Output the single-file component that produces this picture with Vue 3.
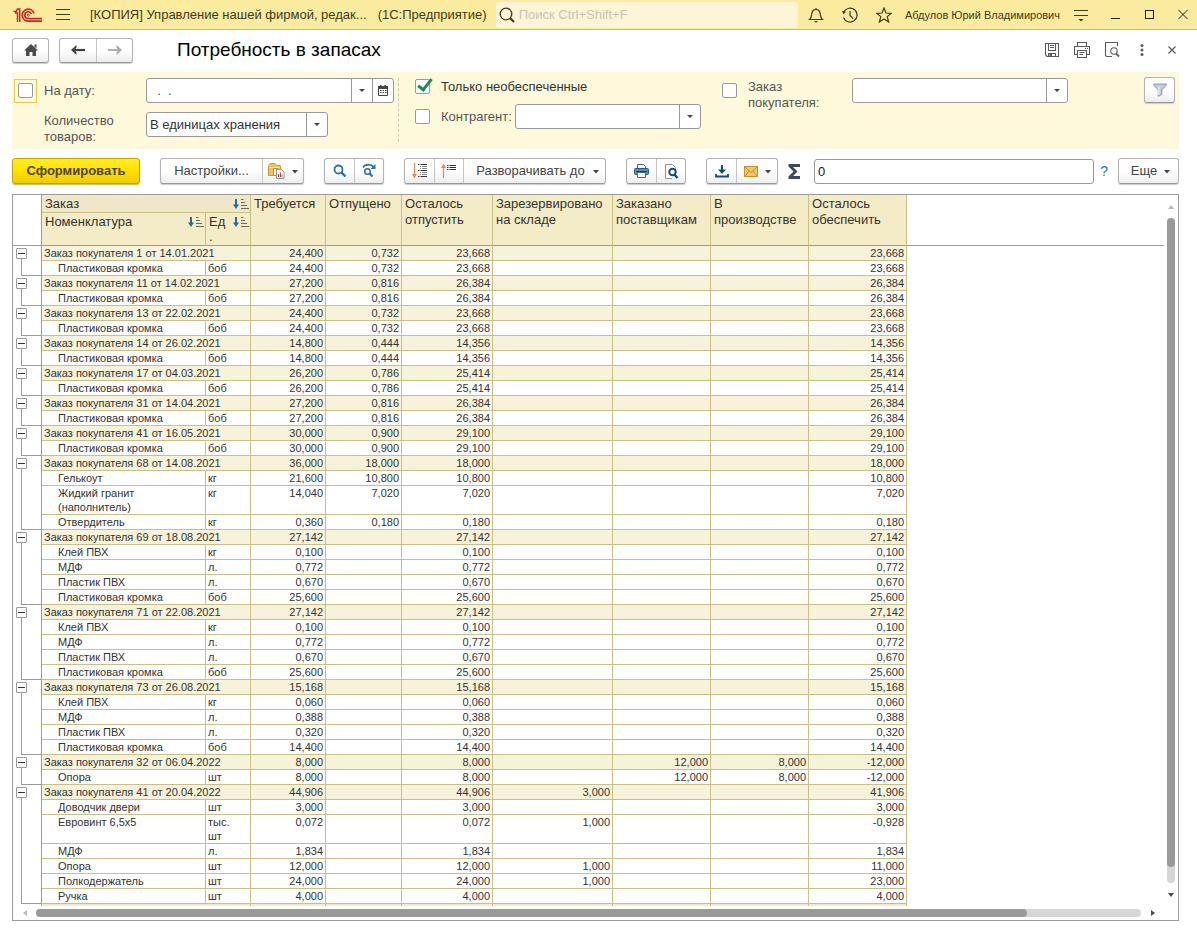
<script setup>
import { ref } from 'vue'

const onlyMissing = ref(true)
const byDate = ref(false)
const byPartner = ref(false)
const byOrder = ref(false)
const date = ref('\u00a0\u00a0.\u00a0\u00a0.')
const total = ref('0')
const search = ref('')

const band = (title, values, items) => ({ title, values, items })
const edge = (number, day, a, b, c) =>
  band(`Заказ покупателя ${number} от ${day}`, [a, b, c, '', '', '', c], [
    ['Пластиковая кромка', 'боб', a, b, c, '', '', '', c],
  ])
const line = (name, unit, v) => [name, unit, v, '', v, '', '', '', v]

const groups = [
  edge('1', '14.01.2021', '24,400', '0,732', '23,668'),
  edge('11', '14.02.2021', '27,200', '0,816', '26,384'),
  edge('13', '22.02.2021', '24,400', '0,732', '23,668'),
  edge('14', '26.02.2021', '14,800', '0,444', '14,356'),
  edge('17', '04.03.2021', '26,200', '0,786', '25,414'),
  edge('31', '14.04.2021', '27,200', '0,816', '26,384'),
  edge('41', '16.05.2021', '30,000', '0,900', '29,100'),
  band('Заказ покупателя 68 от 14.08.2021', ['36,000', '18,000', '18,000', '', '', '', '18,000'], [
    ['Гелькоут', 'кг', '21,600', '10,800', '10,800', '', '', '', '10,800'],
    ['Жидкий гранит (наполнитель)', 'кг', '14,040', '7,020', '7,020', '', '', '', '7,020'],
    ['Отвердитель', 'кг', '0,360', '0,180', '0,180', '', '', '', '0,180'],
  ]),
  band('Заказ покупателя 69 от 18.08.2021', ['27,142', '', '27,142', '', '', '', '27,142'], [
    line('Клей ПВХ', 'кг', '0,100'),
    line('МДФ', 'л.', '0,772'),
    line('Пластик ПВХ', 'л.', '0,670'),
    line('Пластиковая кромка', 'боб', '25,600'),
  ]),
  band('Заказ покупателя 71 от 22.08.2021', ['27,142', '', '27,142', '', '', '', '27,142'], [
    line('Клей ПВХ', 'кг', '0,100'),
    line('МДФ', 'л.', '0,772'),
    line('Пластик ПВХ', 'л.', '0,670'),
    line('Пластиковая кромка', 'боб', '25,600'),
  ]),
  band('Заказ покупателя 73 от 26.08.2021', ['15,168', '', '15,168', '', '', '', '15,168'], [
    line('Клей ПВХ', 'кг', '0,060'),
    line('МДФ', 'л.', '0,388'),
    line('Пластик ПВХ', 'л.', '0,320'),
    line('Пластиковая кромка', 'боб', '14,400'),
  ]),
  band('Заказ покупателя 32 от 06.04.2022', ['8,000', '', '8,000', '', '12,000', '8,000', '-12,000'], [
    ['Опора', 'шт', '8,000', '', '8,000', '', '12,000', '8,000', '-12,000'],
  ]),
  band('Заказ покупателя 41 от 20.04.2022', ['44,906', '', '44,906', '3,000', '', '', '41,906'], [
    line('Доводчик двери', 'шт', '3,000'),
    ['Евровинт 6,5х5', 'тыс. шт', '0,072', '', '0,072', '1,000', '', '', '-0,928'],
    line('МДФ', 'л.', '1,834'),
    ['Опора', 'шт', '12,000', '', '12,000', '1,000', '', '', '11,000'],
    ['Полкодержатель', 'шт', '24,000', '', '24,000', '1,000', '', '', '23,000'],
    line('Ручка', 'шт', '4,000'),
  ]),
]

const heads = [
  'Требуется', 'Отпущено', 'Осталось отпустить', 'Зарезервировано на складе',
  'Заказано поставщикам', 'В производстве', 'Осталось обеспечить',
]
</script>

<template>
  <div class="app">
    <header class="titlebar">
      <svg class="logo" width="30" height="16" viewBox="0 0 30 16" fill="none" stroke="#c9252b">
        <path d="M0.500 4.500 H3 L4.500 2 H6.700 V15 M2 6 H4.500 V15" stroke-width="1.500" />
        <path d="M21 6.500 A6 6 0 1 0 15.500 14.200 H29" stroke-width="1.700" />
        <path d="M18.300 7 A3.400 3.400 0 1 0 15.500 11.600 H29" stroke-width="1.700" />
        <circle cx="15.300" cy="8.200" r="1" stroke-width="1" />
      </svg>
      <button class="plain burger" aria-label="Меню">
        <svg width="14" height="12" viewBox="0 0 14 12" stroke="#3f3b22"><path d="M0 0.500H14M0 5.500H14M0 10.500H14" /></svg>
      </button>
      <span class="app-name">[КОПИЯ] Управление нашей фирмой, редак...</span>
      <span class="platform">(1С:Предприятие)</span>
      <label class="search">
        <svg width="16" height="16" viewBox="0 0 16 16" fill="none" stroke="#3f3b2a"><circle cx="7" cy="7" r="5.800" stroke-width="1.300" /><path d="M11 11L15 15" stroke-width="2.200" /></svg>
        <input v-model="search" placeholder="Поиск Ctrl+Shift+F" aria-label="Поиск" />
      </label>
      <nav class="tools">
        <button class="plain" aria-label="Уведомления">
          <svg width="16" height="16" viewBox="0 0 16 16" fill="none" stroke="#3f3b22" stroke-width="1.200"><path d="M1.500 12.500 C4 10.500 3.500 8 4 5.500 C4.500 3.500 6 2.500 8 2.500 C10 2.500 11.500 3.500 12 5.500 C12.500 8 12 10.500 14.500 12.500 Z M8 2.500 V1" /><path d="M6 14 H10 L8 15.800 Z" fill="#3f3b22" stroke="none" /></svg>
        </button>
        <button class="plain" aria-label="История">
          <svg width="16" height="16" viewBox="0 0 16 16" fill="none" stroke="#3f3b22" stroke-width="1.200"><path d="M1.800 5 A7 7 0 1 1 1.500 10.500" /><path d="M8 4 V8.500 L11 11.500" /><path d="M0 4 L4 4.500 L1.500 7.500 Z" fill="#3f3b22" stroke="none" /></svg>
        </button>
        <button class="plain" aria-label="Избранное">
          <svg width="16" height="16" viewBox="0 0 16 16" fill="none" stroke="#3f3b22" stroke-width="1.200"><path d="M8 1 L10 6 L15.200 6.300 L11.200 9.600 L12.700 15 L8 12 L3.300 15 L4.800 9.600 L0.800 6.300 L6 6 Z" /></svg>
        </button>
      </nav>
      <span class="user">Абдулов Юрий Владимирович</span>
      <nav class="window">
        <button class="plain" aria-label="Настройка панели">
          <svg width="16" height="14" viewBox="0 0 16 14" stroke="#3f3b22" stroke-width="1.200"><path d="M1 2.500H15M1 7.500H15" /><path d="M5.500 11H10.500L8 13.500Z" fill="#3f3b22" stroke="none" /></svg>
        </button>
        <button class="plain" aria-label="Свернуть">
          <svg width="12" height="12" viewBox="0 0 12 12" stroke="#222"><path d="M2 9.500H11" /></svg>
        </button>
        <button class="plain" aria-label="Развернуть">
          <svg width="12" height="12" viewBox="0 0 12 12" fill="none" stroke="#222"><rect x="2.500" y="1.500" width="8" height="8" /></svg>
        </button>
        <button class="plain" aria-label="Закрыть">
          <svg width="12" height="12" viewBox="0 0 12 12" stroke="#222"><path d="M1.500 1L10.500 10M10.500 1L1.500 10" /></svg>
        </button>
      </nav>
    </header>

    <div class="pagehead">
      <div class="group">
        <button class="w37" aria-label="Начальная страница">
          <svg width="14" height="12" viewBox="0 0 14 12" fill="#4a4a4a"><path d="M7 0 L14 6.500 H12 V12 H8.500 V8 H5.500 V12 H2 V6.500 H0 Z" /><path d="M10.500 0.500H12.500V4.500L10.500 2.500Z" /></svg>
        </button>
      </div>
      <div class="group">
        <button class="w37" aria-label="Назад">
          <svg width="14" height="10" viewBox="0 0 14 10"><path d="M14 5H3" stroke="#404040" stroke-width="2.200" /><path d="M5.500 0 V2.500 L3.500 5 L5.500 7.500 V10 L0 5Z" fill="#404040" /></svg>
        </button>
        <button class="w37" aria-label="Вперед">
          <svg width="14" height="10" viewBox="0 0 14 10"><path d="M0 5H11" stroke="#a9a9a9" stroke-width="1.800" /><path d="M8.500 0 V2.500 L10.500 5 L8.500 7.500 V10 L14 5Z" fill="#a9a9a9" /></svg>
        </button>
      </div>
      <h1>Потребность в запасах</h1>
      <nav class="page-tools">
        <button class="plain" aria-label="Сохранить">
          <svg width="16" height="16" viewBox="0 0 16 16" fill="none" stroke="#5a5a5a" stroke-width="1.100"><path d="M1.500 1.500H14.500V14.500H3L1.500 13Z" /><path d="M4.500 1.500V8.500H11.500V1.500M6 3.500H10M6 5.500H10M4.500 14.500V11.500H11.500V14.500" /><path d="M5.500 12H8V14.500H5.500Z" fill="#5a5a5a" stroke="none" /></svg>
        </button>
        <button class="plain" aria-label="Печать">
          <svg width="16" height="16" viewBox="0 0 16 16" fill="none" stroke="#5a5a5a" stroke-width="1.100"><path d="M3.500 4.500V0.500H12.500V4.500M3.500 12.500H0.500V4.500H15.500V12.500H12.500" /><path d="M3.500 8.500H12.500V15.500H3.500ZM5.500 10.500H10.500M5.500 12.500H9M11 6.500H12M13 6.500H14" /></svg>
        </button>
        <button class="plain" aria-label="Предварительный просмотр">
          <svg width="16" height="16" viewBox="0 0 16 16" fill="none" stroke="#5a5a5a" stroke-width="1.100"><path d="M8 14.500H2.500L1.500 13.500V0.500H13.500V4" /><circle cx="10" cy="9" r="3.200" /><path d="M12 11.500L15 14.500" stroke-width="1.800" /></svg>
        </button>
        <button class="plain" aria-label="Другие действия">
          <svg width="16" height="16" viewBox="0 0 16 16" fill="#5a5a5a"><circle cx="8" cy="3.500" r="1.500" /><circle cx="8" cy="8" r="1.500" /><circle cx="8" cy="12.500" r="1.500" /></svg>
        </button>
        <button class="plain" aria-label="Закрыть форму">
          <svg width="16" height="16" viewBox="0 0 16 16" stroke="#5a5a5a" stroke-width="1.200"><path d="M4.500 4.500L11.500 11.500M11.500 4.500L4.500 11.500" /></svg>
        </button>
      </nav>
    </div>

    <form class="filters" @submit.prevent>
      <div class="fields">
        <span class="focus"><input id="by-date" v-model="byDate" type="checkbox" /></span>
        <label for="by-date">На дату:</label>
        <div class="datebox">
          <input v-model="date" type="text" aria-label="Дата" />
          <button aria-label="Выбрать"><svg width="6" height="3" viewBox="0 0 6 3" fill="#444"><path d="M0 0H6L3 3Z" /></svg></button>
          <button aria-label="Календарь">
            <svg width="10" height="11" viewBox="0 0 10 11"><path d="M0.500 1.500H9.500V10.500H0.500Z" fill="#fff" stroke="#444" /><path d="M0 1H10V4H0ZM2 0H3.500V2H2ZM6.500 0H8V2H6.500Z" fill="#444" /><path d="M2 5.500H8.500M2 7.500H8.500" stroke="#444" stroke-dasharray="1.500 1" /></svg>
          </button>
        </div>
        <span></span>
        <label for="units">Количество товаров:</label>
        <div class="combo units">
          <select id="units"><option>В единицах хранения</option></select>
          <svg width="6" height="3" viewBox="0 0 6 3" fill="#444"><path d="M0 0H6L3 3Z" /></svg>
        </div>
      </div>
      <div class="partner">
        <div class="line">
          <input id="only" v-model="onlyMissing" type="checkbox" />
          <label for="only" class="dark">Только необеспеченные</label>
        </div>
        <div class="line">
          <input id="partner" v-model="byPartner" type="checkbox" />
          <label for="partner">Контрагент:</label>
          <div class="combo">
            <select aria-label="Контрагент"><option></option></select>
            <svg width="6" height="3" viewBox="0 0 6 3" fill="#444"><path d="M0 0H6L3 3Z" /></svg>
          </div>
        </div>
      </div>
      <div class="order">
        <input id="order" v-model="byOrder" type="checkbox" />
        <label for="order">Заказ покупателя:</label>
        <div class="combo">
          <select aria-label="Заказ покупателя"><option></option></select>
          <svg width="6" height="3" viewBox="0 0 6 3" fill="#444"><path d="M0 0H6L3 3Z" /></svg>
        </div>
      </div>
      <div class="group funnel">
        <button class="w30" aria-label="Отбор">
          <svg width="14" height="14" viewBox="0 0 14 14"><path d="M0.700 1 H13.300 V2 L8.800 7 V11.500 L5.300 13.300 V7 L0.700 2Z" fill="#c3ccd6" stroke="#8797a8" /><path d="M5.800 3.500V12" stroke="#e6ecf2" stroke-width="1.500" /></svg>
        </button>
      </div>
    </form>

    <div class="toolbar">
      <button class="generate">Сформировать</button>
      <div class="group">
        <button class="settings">Настройки...</button>
        <button class="menu41" aria-label="Варианты отчета">
          <svg width="17" height="16" viewBox="0 0 17 16"><path d="M0.500 2.500 L2 0.500H7L8.500 2.500H12.500V12.500H0.500Z" fill="#eec25c" stroke="#d39b34" /><path d="M1 4.500H12" stroke="#fbe5a8" /><path d="M5.500 5.500H10" stroke="#c58f3b" /><path d="M5.500 5.500H9.500V12.500H5.500Z" fill="#f8efd8" stroke="#b0905e" /><path d="M8.500 6.500H13.500L16 9V15.500H8.500Z" fill="#fff" stroke="#8d9196" /><path d="M10.500 14V11M12.500 14V9.500" stroke="#d33a3a" /><path d="M14 14V11.500" stroke="#3c9a54" /></svg>
          <svg class="caret" width="6" height="4" viewBox="0 0 6 4" fill="#444"><path d="M0 0H6L3 3.500Z" /></svg>
        </button>
      </div>
      <div class="group">
        <button class="w30" aria-label="Найти"><svg width="14" height="14" viewBox="0 0 14 14" fill="none" stroke="#2b72a6"><circle cx="5.500" cy="5.500" r="4" stroke-width="1.800" /><path d="M8.500 8.500L12.500 12.500" stroke-width="2.400" /></svg></button>
        <button class="w30" aria-label="Найти далее"><svg width="14" height="16" viewBox="0 0 14 16" fill="none" stroke="#2b72a6"><path d="M1 4.500 C3 1 9 0.500 11.500 4" stroke-width="1.600" /><path d="M13.500 1V6H8.500Z" fill="#2b72a6" stroke="none" /><circle cx="5.500" cy="8.500" r="2.800" stroke-width="1.500" /><path d="M7.500 10.500L10.500 13.500" stroke-width="2" /></svg></button>
      </div>
      <div class="group">
        <button class="w30" aria-label="Развернуть группы"><svg width="16" height="16" viewBox="0 0 16 16"><path d="M2.500 0V14" stroke="#e88a58" stroke-width="1.300" /><path d="M0 11H5L2.500 15.500Z" fill="#e88a58" /><path d="M6 1.500H7.500M8.500 1.500H15M6 7.500H7.500M8.500 7.500H15M6 13.500H7.500M8.500 13.500H15" stroke="#333" /><path d="M8 3.500H9M10 3.500H15M8 5.500H9M10 5.500H15M8 9.500H9M10 9.500H15M8 11.500H9M10 11.500H15" stroke="#888" /></svg></button>
        <button class="w30" aria-label="Свернуть группы"><svg width="16" height="16" viewBox="0 0 16 16"><path d="M2.500 15V2" stroke="#e88a58" stroke-width="1.300" /><path d="M0 5H5L2.500 0.500Z" fill="#e88a58" /><path d="M6 2.500H7.500M8.500 2.500H15M6 4.500H7.500M8.500 4.500H15M6 6.500H7.500M8.500 6.500H15" stroke="#333" /></svg></button>
        <button class="expand">Разворачивать до<svg class="caret" width="6" height="4" viewBox="0 0 6 4" fill="#444"><path d="M0 0H6L3 3.500Z" /></svg></button>
      </div>
      <div class="group">
        <button class="w30" aria-label="Печать отчета"><svg width="15" height="14" viewBox="0 0 15 14"><path d="M3.500 5V0.500H9.500L11.500 2.500V5" fill="#fff" stroke="#3b6a93" /><rect x="0.500" y="4.500" width="14" height="6" rx="1" fill="#5f8bb3" stroke="#2e5c86" /><path d="M2 7.500H13" stroke="#1d3f5e" /><path d="M3.500 8.500H11.500V13.500H3.500Z" fill="#fff" stroke="#3b6a93" /></svg></button>
        <button class="w30" aria-label="Просмотр"><svg width="15" height="15" viewBox="0 0 15 15" fill="none"><path d="M11.500 5V3.500L8.500 0.500H1.500V14.500H8" stroke="#8a959e" fill="#fff" /><circle cx="8.500" cy="8" r="3.200" stroke="#0f4d7c" stroke-width="2" /><path d="M10.500 10.500L13.500 14" stroke="#0f4d7c" stroke-width="2.400" /></svg></button>
      </div>
      <div class="group">
        <button class="w30" aria-label="Сохранить отчет"><svg width="14" height="13" viewBox="0 0 14 13"><path d="M7 0V6" stroke="#0f4d7c" stroke-width="2" /><path d="M3 4.500H11L7 9Z" fill="#0f4d7c" /><path d="M1 9V11.500H13V9" fill="none" stroke="#0f4d7c" stroke-width="1.800" /></svg></button>
        <button class="menu41" aria-label="Отправить">
          <svg width="14" height="11" viewBox="0 0 14 11"><rect x="0.500" y="0.500" width="13" height="10" fill="#f3c766" stroke="#c98f2b" /><path d="M1 1L7 6.500L13 1M1 10L5 5M13 10L9 5" fill="none" stroke="#c98f2b" /></svg>
          <svg class="caret" width="6" height="4" viewBox="0 0 6 4" fill="#444"><path d="M0 0H6L3 3.500Z" /></svg>
        </button>
      </div>
      <svg class="sigma" width="13" height="15" viewBox="0 0 13 15" fill="#3c4b57"><path d="M0.500 0H12V3H5L9.500 7.500L5 12H12V15H0.500V12.500L5.500 7.500L0.500 2.500Z" /></svg>
      <input v-model="total" class="sum" type="text" aria-label="Сумма" />
      <a class="help" href="#">?</a>
      <div class="group"><button class="more">Еще<svg class="caret" width="6" height="4" viewBox="0 0 6 4" fill="#444"><path d="M0 0H6L3 3.500Z" /></svg></button></div>
    </div>

    <main class="report">
      <div class="sheet">
        <table>
          <colgroup>
            <col class="c-tree" /><col class="c-name" /><col class="c-unit" /><col class="c-req" /><col class="c-out" />
            <col class="c-left" /><col class="c-res" /><col class="c-std" /><col class="c-std" /><col class="c-std" /><col />
          </colgroup>
          <thead>
            <tr>
              <td class="tree" rowspan="2"></td>
              <th class="top" colspan="2"><div class="sorted"><span>Заказ</span>
                <svg width="16" height="12" viewBox="0 0 16 12"><path d="M3 1V8" stroke="#1f6ea5" stroke-width="2" /><path d="M0 6.500H6L3 11Z" fill="#1f6ea5" /><path d="M8 1.500H10.500M8 4.500H12M8 7.500H14M8 10.500H16" stroke="#6c6a5c" /></svg>
              </div></th>
              <th v-for="h in heads" :key="h" rowspan="2">{{ h }}</th>
              <td class="rest" rowspan="2"></td>
            </tr>
            <tr class="second">
              <th><div class="sorted"><span>Номенклатура</span>
                <svg width="16" height="12" viewBox="0 0 16 12"><path d="M3 1V8" stroke="#1f6ea5" stroke-width="2" /><path d="M0 6.500H6L3 11Z" fill="#1f6ea5" /><path d="M8 1.500H10.500M8 4.500H12M8 7.500H14M8 10.500H16" stroke="#6c6a5c" /></svg>
              </div></th>
              <th><div class="sorted"><span>Ед<wbr />.</span>
                <svg width="16" height="12" viewBox="0 0 16 12"><path d="M3 1V8" stroke="#1f6ea5" stroke-width="2" /><path d="M0 6.500H6L3 11Z" fill="#1f6ea5" /><path d="M8 1.500H10.500M8 4.500H12M8 7.500H14M8 10.500H16" stroke="#6c6a5c" /></svg>
              </div></th>
            </tr>
          </thead>
          <tbody v-for="g in groups" :key="g.title">
            <tr class="band">
              <td class="tree"><button class="toggle" aria-label="Свернуть группу"></button></td>
              <td colspan="2">{{ g.title }}</td>
              <td v-for="(v, i) in g.values" :key="i" class="num">{{ v }}</td>
              <td class="rest"></td>
            </tr>
            <tr v-for="row in g.items" :key="row[0]" class="item">
              <td class="tree"></td>
              <td class="name">{{ row[0] }}</td>
              <td class="unit">{{ row[1] }}</td>
              <td v-for="(v, i) in row.slice(2)" :key="i" class="num">{{ v }}</td>
              <td class="rest"></td>
            </tr>
          </tbody>
          <tfoot>
            <tr class="foot">
              <td class="tree"></td><td colspan="2"></td><td v-for="h in heads" :key="h"></td><td class="rest"></td>
            </tr>
          </tfoot>
        </table>
      </div>
      <div class="vbar">
        <button class="plain" aria-label="Вверх"><svg width="6" height="4" viewBox="0 0 6 4" fill="#b8b8b8"><path d="M0 4H6L3 0Z" /></svg></button>
        <div class="track"><div class="thumb"></div></div>
        <button class="plain" aria-label="Вниз"><svg width="6" height="4" viewBox="0 0 6 4" fill="#4a4a4a"><path d="M0 0H6L3 4Z" /></svg></button>
      </div>
      <div class="hbar">
        <button class="plain" aria-label="Влево"><svg width="4" height="6" viewBox="0 0 4 6" fill="#b8b8b8"><path d="M4 0V6L0 3Z" /></svg></button>
        <div class="track"><div class="thumb"></div></div>
        <button class="plain" aria-label="Вправо"><svg width="4" height="6" viewBox="0 0 4 6" fill="#4a4a4a"><path d="M0 0V6L4 3Z" /></svg></button>
      </div>
    </main>
  </div>
</template>

<style>
body { margin: 0; background: #fff; }
</style>

<style scoped>
* { box-sizing: border-box; }
.app {
  display: flex; flex-direction: column; height: 100vh; padding-bottom: 10px;
  font: 13px/16px "Liberation Sans", Arial, sans-serif; color: #444; background: #fff; overflow: hidden;
}
button, input, select { font: inherit; color: inherit; margin: 0; }
svg { display: block; flex: none; }
.plain { display: flex; align-items: center; justify-content: center; padding: 0; border: 0; background: none; }

.titlebar {
  display: flex; align-items: center; flex: none; height: 30px; padding-left: 13px;
  background: #fbeb9e; border-bottom: 1px solid #c9bb6c; color: #3f3b22; white-space: nowrap;
}
.burger { margin: 0 20px 0 13px; }
.app-name { margin-right: 11px; }
.search {
  display: flex; align-items: center; flex: 1; gap: 4px; height: 26px; margin: 0 2px 0 9px; padding-left: 3px;
  background: #fdf5d5; border-radius: 3px;
}
.search input { flex: 1; min-width: 0; padding: 0; border: 0; background: none; outline: 0; }
.search input::placeholder { color: #c9c4b4; opacity: 1; }
.tools { display: flex; margin-left: -1px; }
.tools .plain { width: 34px; }
.user { margin-left: 4px; font-size: 11px; }
.window { display: flex; margin: 0 -3px 0 4px; }
.window .plain { width: 34px; height: 26px; }

.pagehead { display: flex; align-items: center; flex: none; gap: 10px; height: 42px; padding: 0 10px 2px 12px; }
.group button.w37 { width: 36px; height: 23px; }
.group button.w37:first-child:last-child { width: 35px; }
h1 { flex: 1; margin: 0 0 0 34px; font-size: 19px; line-height: 22px; font-weight: 400; color: #000; }
.page-tools { display: flex; }
.page-tools .plain { width: 30px; height: 24px; }

.group { display: flex; flex: none; border: 1px solid #b3b3b3; border-bottom-color: #989898; border-radius: 3px; background: linear-gradient(#fff 50%, #ededed); box-shadow: 0 1px 1px #ccc; }
.group button {
  display: flex; align-items: center; justify-content: center; height: 24px; padding: 0;
  border: 0; border-left: 1px solid #c4c4c4; background: none; color: #444; white-space: nowrap;
}
.group button:first-child { border-left: 0; }
.group .w30 { width: 29px; }

.filters { display: flex; flex: none; align-items: flex-start; height: 77px; margin: 0 18px 0 12px; padding: 6px 4px 0 2px; background: #fef9da; }
.filters label { color: #555; }
.filters label.dark { color: #333; }
input[type="checkbox"] {
  appearance: none; flex: none; display: block; width: 15px; height: 15px; border: 1px solid #999; border-radius: 2px; background: #fff;
}
#only:checked { display: grid; }
#only:checked::before {
  content: ""; width: 5px; height: 12px; margin: -4px 0 0 5px; border: solid #12904a; border-width: 0 3px 3px 0; transform: rotate(38deg);
}
.fields { display: grid; grid-template: 25px 25px / 23px 95px auto; gap: 9px 7px; align-items: center; align-content: start; height: 64px; padding-right: 4px; border-right: 1px dashed #ccc9b6; }
.fields label { width: 90px; }
.fields label[for="units"] { margin-top: 8px; }
.focus { display: flex; align-items: center; justify-content: center; width: 23px; height: 24px; border: 1px solid #e9c94a; }
.datebox { display: flex; width: 248px; height: 25px; border: 1px solid #999; border-radius: 3px; background: #fff; overflow: hidden; }
.datebox input { flex: 1; min-width: 0; padding: 0 3px; border: 0; outline: 0; background: none; }
.datebox button { display: flex; align-items: center; justify-content: center; width: 21px; padding: 0; border: 0; border-left: 1px solid #999; background: none; }
.combo { display: grid; grid-template-columns: 1fr 21px; width: 186px; height: 25px; border: 1px solid #999; border-radius: 3px; background: #fff; }
.combo.units { width: 182px; }
.combo select { grid-area: 1 / 1 / 2 / 3; appearance: none; padding: 0 3px; border: 0; outline: 0; background: linear-gradient(#999, #999) right 20px top / 1px 100% no-repeat; color: #333; }
.combo svg { grid-area: 1 / 2; place-self: center; pointer-events: none; }
.partner { display: flex; flex-direction: column; width: 324px; margin-left: 16px; }
.line { display: flex; align-items: center; height: 25px; }
.line:first-child { height: 17px; margin-bottom: 9px; }
.line label { margin-left: 11px; }
.line .combo { margin-left: auto; margin-right: 38px; }
.order { display: flex; align-items: flex-start; flex: 1; margin-left: -17px; }
.order > input { margin-top: 5px; }
.order label { width: 93px; margin: 1px 0 0 11px; }
.order .combo { width: 216px; margin-left: 11px; }
.funnel { margin-top: -1px; }

.toolbar { display: flex; flex: none; align-items: center; gap: 20px; height: 45px; padding: 0 18px 1px 12px; }
.generate {
  width: 128px; height: 26px; padding: 0; border: 1px solid #c5a400; border-radius: 3px;
  background: linear-gradient(#ffee22, #ffe000 50%, #f0cb00); box-shadow: 0 1px 1px #c9b860; font-weight: 700; color: #4b4423;
}
.settings { width: 101px; }
.menu41 { width: 41px; gap: 6px; }
.caret { margin-left: 1px; margin-top: 2px; }
.expand { width: 142px; gap: 7px; }
.group .expand { padding-left: 6px; }
.sigma { margin: 0 -7px 0 -10px; }
.sum { flex: 1; min-width: 60px; height: 25px; padding: 0 3px; border: 1px solid #999; border-radius: 3px; outline: 0; color: #222; }
.help { margin: 0 -11px 0 -16px; padding: 0 1px 0 2px; color: #2077b2; text-decoration: none; font-size: 14px; }
.more { width: 59px; gap: 6px; }
.group .more { padding-left: 4px; }

.report { display: grid; flex: 1; min-height: 0; grid-template: minmax(0, 1fr) 14px / minmax(0, 1fr) 14px; margin: 0 18px 0 12px; border: 1px solid #9b9b9b; }
.sheet { overflow: hidden; }
table { width: 100%; table-layout: fixed; border-collapse: separate; border-spacing: 0; color: #333; }
.c-tree { width: 29px; } .c-name { width: 164px; } .c-unit { width: 45px; } .c-req { width: 75px; } .c-out { width: 76px; }
.c-left { width: 91px; } .c-res { width: 120px; } .c-std { width: 98px; }
td, th { padding: 0 2px; border: solid #cabf85; border-width: 0 1px 1px 0; vertical-align: top; text-align: left; font-weight: 400; }
thead { font-size: 13px; line-height: 16px; }
thead tr { height: 18px; }
thead tr.second { height: 33px; }
th { padding: 1px 3px 0; background: #f3ecc6; }
th.top { background: #eee8c8; }
thead .second th, thead th[rowspan], thead td { border-bottom-color: #9b9b9b; }
thead .second th { padding-top: 1px; line-height: 15px; }
.sorted { display: flex; justify-content: space-between; gap: 6px; }
.sorted span { min-width: 0; }
.sorted svg { margin: 2px -2px 0 0; }
tbody, tfoot { font-size: 11px; line-height: 14px; }
.band td { background-color: #f7f2da; }
.num { text-align: right; }
.item .name { padding: 0 40px 0 16px; }
.item .unit { padding-right: 8px; }
.band .tree, .item .tree, .foot .tree, .rest, .band .rest { background-color: #fff; }
td.tree { padding: 0; border-right-color: #9b9b9b; }
tbody .tree, tfoot .tree { border-bottom: 0; }
.band .tree { background-image: linear-gradient(#9b9b9b, #9b9b9b); background-size: 1px 4px; background-position: 8px 100%; background-repeat: no-repeat; }
.item .tree { background: linear-gradient(#9b9b9b, #9b9b9b) 8px 0 / 1px 100% no-repeat; }
.item:last-child .tree { background: linear-gradient(#9b9b9b, #9b9b9b) 8px 0 / 1px 100% no-repeat, linear-gradient(#9b9b9b, #9b9b9b) 8px 100% / 20px 1px no-repeat; }
.toggle { display: block; width: 11px; height: 11px; margin: 2px 0 0 3px; padding: 0; border: 1px solid #999; border-radius: 1px; background: linear-gradient(#333, #333) center / 7px 1px no-repeat #fff; }
.rest { border-right: 0; }
tbody .rest, tfoot .rest { border-bottom: 0; }
.foot { height: 15px; }
.foot td { background-color: #f3ecc6; }
.foot td.tree, .foot td.rest { background-color: #fff; }

.vbar, .hbar { display: flex; align-items: center; }
.vbar { flex-direction: column; grid-area: 1 / 2; }
.vbar .plain { width: 14px; height: 23px; flex: none; }
.vbar .track { flex: 1; width: 8px; }
.hbar { grid-area: 2 / 1; }
.hbar .plain { width: 23px; height: 14px; flex: none; }
.hbar .track { flex: 1; height: 8px; }
.track { border-radius: 4px; background: #d6d6d6; }
.thumb { border-radius: 4px; background: #999; }
.vbar .thumb { height: 97.6%; }
.hbar .thumb { width: 89.7%; height: 100%; }
</style>
